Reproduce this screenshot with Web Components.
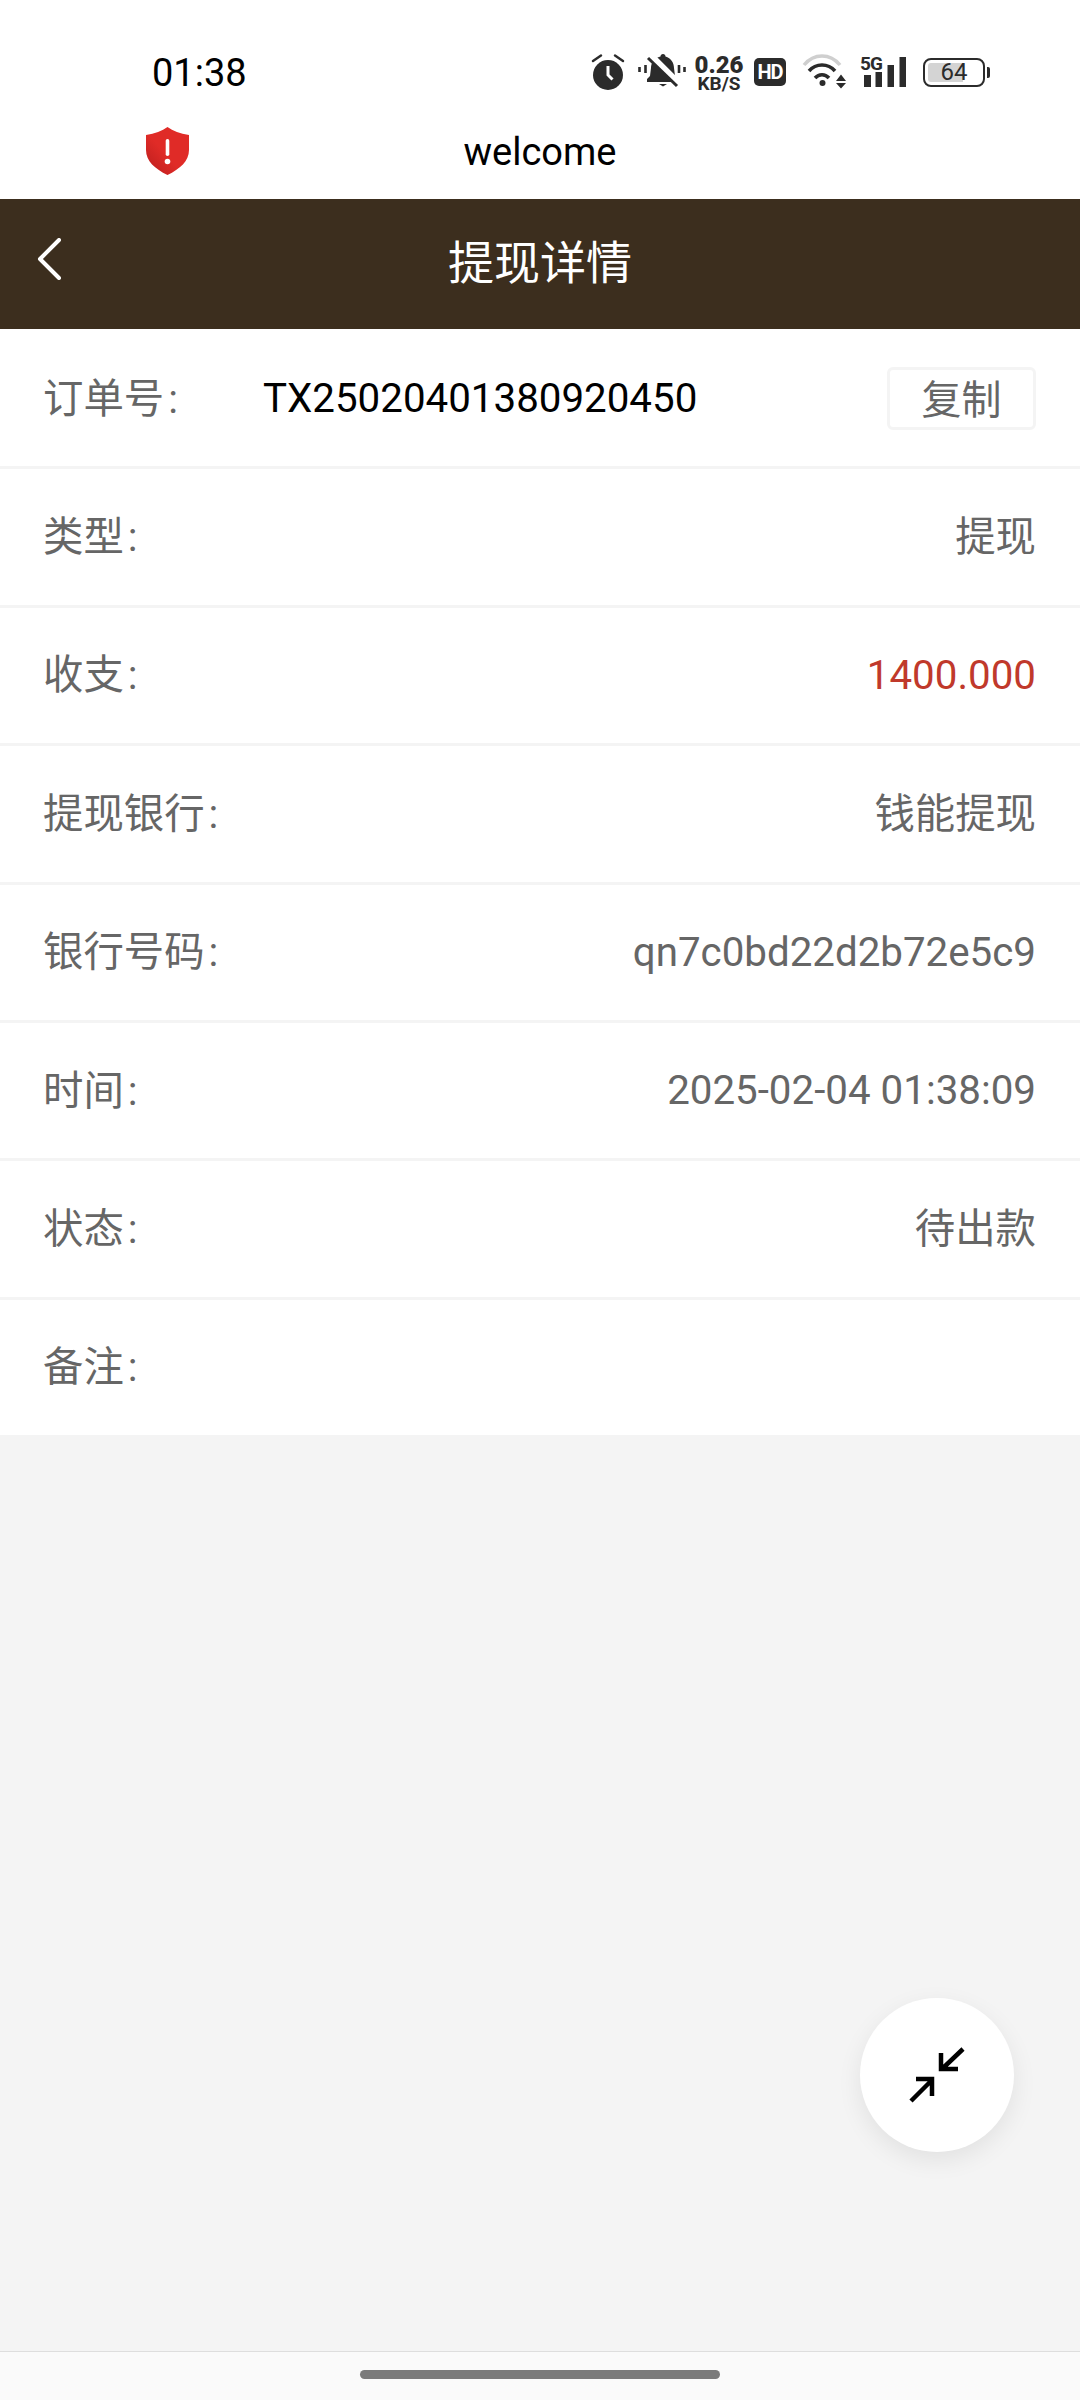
<!DOCTYPE html>
<html lang="zh">
<head>
<meta charset="utf-8">
<title>提现详情</title>
<style>
    html, body { margin: 0; padding: 0; }
    body {
        width: 1080px;
        height: 2400px;
        background: #f4f4f4;
        display: flex;
        flex-direction: column;
        position: relative;
        overflow: hidden;
        font-family: Roboto, "Noto Sans CJK SC", sans-serif;
    }
    detail-list { flex: 1; }
</style>
</head>
<body>
<status-bar></status-bar>
<url-bar>welcome</url-bar>
<title-bar>提现详情</title-bar>
<detail-list>
    <detail-row label="订单号" mode="order">TX25020401380920450</detail-row>
    <detail-row label="类型" mode="cjk">提现</detail-row>
    <detail-row label="收支" mode="money">1400.000</detail-row>
    <detail-row label="提现银行" mode="cjk">钱能提现</detail-row>
    <detail-row label="银行号码">qn7c0bd22d2b72e5c9</detail-row>
    <detail-row label="时间">2025-02-04 01:38:09</detail-row>
    <detail-row label="状态" mode="cjk">待出款</detail-row>
    <detail-row label="备注" class="last"></detail-row>
</detail-list>
<float-button></float-button>
<nav-handle></nav-handle>

<script>
class StatusBar extends HTMLElement {
    connectedCallback() {
        this.attachShadow({ mode: 'open' });
        this.shadowRoot.innerHTML = `
            <style>
                :host {
                    display: flex;
                    align-items: center;
                    justify-content: space-between;
                    height: 105px;
                    padding: 39px 95px 0 152px;
                    box-sizing: border-box;
                    background: #fff;
                    color: #000;
                    font-family: Roboto, sans-serif;
                }
                .time { font-size: 38px; line-height: 40px; margin-top: 1px; }
                .icons { display: flex; align-items: center; color: #2b2b2b; height: 40px; }
                svg { display: block; flex: none; }
                .speed {
                    width: 48px;
                    margin-left: 7px;
                    text-align: center;
                    font-weight: 700;
                    display: flex;
                    flex-direction: column;
                    align-items: center;
                }
                .speed b { font-size: 24px; line-height: 22px; }
                .speed span { font-size: 19px; line-height: 15px; }
                .hd {
                    width: 32px;
                    height: 28px;
                    margin-left: 11px;
                    border-radius: 5px;
                    background: #2b2b2b;
                    color: #fff;
                    font-size: 20px;
                    font-weight: 700;
                    line-height: 28px;
                    text-align: center;
                    letter-spacing: -1px;
                }
                .net { position: relative; width: 46px; height: 36px; margin-left: 12px; }
                .net span {
                    position: absolute;
                    left: 0;
                    top: 0;
                    font-size: 19px;
                    line-height: 20px;
                    font-weight: 700;
                    letter-spacing: -1px;
                }
                .battery {
                    position: relative;
                    width: 62px;
                    height: 29px;
                    margin-left: 17px;
                    box-sizing: border-box;
                    border: 2px solid #2b2b2b;
                    border-radius: 8px;
                    text-align: center;
                    font-size: 24px;
                    line-height: 25px;
                }
                .battery i {
                    position: absolute;
                    left: 3px;
                    top: 3px;
                    bottom: 3px;
                    width: 35px;
                    background: #d4d4d4;
                    border-radius: 3px 0 0 3px;
                }
                .battery span { position: relative; }
                .battery em {
                    position: absolute;
                    right: -7px;
                    top: 7px;
                    width: 3px;
                    height: 11px;
                    background: #2b2b2b;
                    border-radius: 0 2px 2px 0;
                }
            </style>
            <div class="time">01:38</div>
            <div class="icons">
                <svg width="34" height="36" viewBox="0 0 34 36">
                    <circle cx="17" cy="21" r="15" fill="currentColor"/>
                    <path d="M2 7l8-5.500M32 7l-8-5.500" stroke="currentColor" stroke-width="2.400" stroke-linecap="round" fill="none"/>
                    <path d="M17 12v9l4.500 4.500" stroke="#fff" stroke-width="3" fill="none"/>
                </svg>
                <svg width="50" height="36" viewBox="0 0 50 36" style="margin-left:13px">
                    <path d="M1.500 13v5M7.500 11v8M41 11v8M46.500 13v5" stroke="currentColor" stroke-width="2.600" fill="none"/>
                    <path d="M25 0c1.500 0 2.500 1 2.500 2.500C33 4 36 9 36 14l1 8 2 3v3H9v-3l3-3 1-8c0-5 3-10 9.500-11.500C22.500 1 23.500 0 25 0z" fill="currentColor"/>
                    <path d="M21 30h8l-4 2.500z" fill="currentColor"/>
                    <path d="M13 2l28 28" stroke="#fff" stroke-width="7"/>
                    <path d="M10 4l29 28" stroke="currentColor" stroke-width="3"/>
                </svg>
                <div class="speed"><b>0.26</b><span>KB/S</span></div>
                <div class="hd">HD</div>
                <svg width="46" height="36" viewBox="0 0 46 36" style="margin-left:16px">
                    <path d="M2 11C12 -1 28 -1 38 11" stroke="#cfcfcf" stroke-width="3.500" fill="none"/>
                    <path d="M7 17C14 9 26 9 33 17" stroke="currentColor" stroke-width="3.500" fill="none"/>
                    <path d="M13 24c4-4.500 10-4.500 14 0" stroke="currentColor" stroke-width="3.500" fill="none"/>
                    <circle cx="20.500" cy="29" r="3" fill="currentColor"/>
                    <path d="M34 27h10l-5-6.500zM34 29h10l-5 5.500z" fill="currentColor"/>
                </svg>
                <div class="net">
                    <span>5G</span>
                    <svg width="46" height="36" viewBox="0 0 46 36">
                        <path d="M4 21h7v12H4zM15.500 18H22v15h-6.500zM27.500 11H34v22h-6.500zM39.500 3H46v30h-6.500z" fill="currentColor"/>
                    </svg>
                </div>
                <div class="battery"><i></i><span>64</span><em></em></div>
            </div>
        `;
    }
}
customElements.define('status-bar', StatusBar);

class UrlBar extends HTMLElement {
    connectedCallback() {
        this.attachShadow({ mode: 'open' });
        this.shadowRoot.innerHTML = `
            <style>
                :host {
                    display: grid;
                    grid-template-columns: 1fr auto 1fr;
                    align-items: center;
                    height: 94px;
                    background: #fff;
                    color: #000;
                    font-family: Roboto, sans-serif;
                    font-size: 38px;
                }
                svg { display: block; margin-left: 146px; margin-top: -2px; }
                .title { margin-top: -1px; }
            </style>
            <svg width="43" height="48" viewBox="0 0 43 48">
                <defs>
                    <linearGradient id="sh" x1="0" y1="1" x2="1" y2="0">
                        <stop offset="0" stop-color="#b81d1d"/>
                        <stop offset=".45" stop-color="#e02b27"/>
                    </linearGradient>
                </defs>
                <path d="M21.500 0C27 4 34 6.500 43 8v15c0 11-9 19-21.500 25C9 42 0 34 0 23V8C9 6.500 16 4 21.500 0z" fill="url(#sh)"/>
                <rect x="19.700" y="12" width="3.600" height="17" rx="1.800" fill="#fff"/>
                <circle cx="21.500" cy="34.500" r="2.800" fill="#fff"/>
            </svg>
            <div class="title"><slot></slot></div>
            <div></div>
        `;
    }
}
customElements.define('url-bar', UrlBar);

class TitleBar extends HTMLElement {
    connectedCallback() {
        this.attachShadow({ mode: 'open' });
        this.shadowRoot.innerHTML = `
            <style>
                :host {
                    display: grid;
                    grid-template-columns: 1fr auto 1fr;
                    align-items: center;
                    height: 130px;
                    background: #3c2e1e;
                    color: #fff;
                    font-family: "Noto Sans CJK SC", sans-serif;
                    font-size: 46px;
                }
                svg { display: block; margin-left: 36px; margin-top: -10px; }
                .title { padding-bottom: 11px; }
            </style>
            <svg width="26" height="42" viewBox="0 0 26 42">
                <path d="M23 2L4 21l19 19" stroke="#fff" stroke-width="4" stroke-linecap="round" stroke-linejoin="round" fill="none"/>
            </svg>
            <div class="title"><slot></slot></div>
            <div></div>
        `;
    }
}
customElements.define('title-bar', TitleBar);

class DetailList extends HTMLElement {
    connectedCallback() {
        this.attachShadow({ mode: 'open' });
        this.shadowRoot.innerHTML = `
            <style>
                :host { display: block; }
                .rows { display: flex; flex-direction: column; padding-top: 2px; background: #fff; }
            </style>
            <div class="rows"><slot></slot></div>
        `;
    }
}
customElements.define('detail-list', DetailList);

class DetailRow extends HTMLElement {
    connectedCallback() {
        const mode = this.getAttribute('mode') || '';
        this.attachShadow({ mode: 'open' });
        this.shadowRoot.innerHTML = `
            <style>
                :host {
                    display: flex;
                    align-items: center;
                    height: 138.4px;
                    box-sizing: border-box;
                    padding: 0 44px 0 43px;
                    border-bottom: 3px solid #f4f4f4;
                    background: #fff;
                    color: #666;
                    font-family: Roboto, "Noto Sans CJK SC", sans-serif;
                    font-size: 40.3px;
                }
                :host(.last) { border-bottom: 0; height: 135px; }
                .label { flex: none; width: 220px; padding-bottom: 7px; font-size: 40.4px; }
                .label span { margin-left: 4px; }
                .value { flex: 1; text-align: right; }
                .value.cjk { padding-bottom: 7px; font-size: 40.4px; }
                .value.money { color: #c0392b; }
                .value.order { text-align: left; color: #000; }
                button {
                    flex: none;
                    width: 149px;
                    height: 63px;
                    padding: 0 0 3px;
                    box-sizing: border-box;
                    border: 3px solid #f4f4f4;
                    border-radius: 6px;
                    background: #fff;
                    color: #666;
                    font-family: "Noto Sans CJK SC", sans-serif;
                    font-size: 40px;
                    line-height: 52px;
                }
            </style>
            <div class="label">${this.getAttribute('label')}<span>:</span></div>
            <div class="value ${mode}"><slot></slot></div>
            ${mode === 'order' ? '<button>复制</button>' : ''}
        `;
    }
}
customElements.define('detail-row', DetailRow);

class FloatButton extends HTMLElement {
    connectedCallback() {
        this.attachShadow({ mode: 'open' });
        this.shadowRoot.innerHTML = `
            <style>
                :host {
                    position: absolute;
                    left: 860px;
                    top: 1998px;
                    width: 154px;
                    height: 154px;
                    display: block;
                    border-radius: 50%;
                    background: #fff;
                    box-shadow: 0 8px 24px rgba(0, 0, 0, .08);
                }
                svg { display: block; }
            </style>
            <svg width="154" height="154" viewBox="0 0 154 154">
                <path d="M103 51L82 71M81 55v16h17M51 103l21-21M56 81h16v17" stroke="#000" stroke-width="4.500" fill="none"/>
            </svg>
        `;
    }
}
customElements.define('float-button', FloatButton);

class NavHandle extends HTMLElement {
    connectedCallback() {
        this.attachShadow({ mode: 'open' });
        this.shadowRoot.innerHTML = `
            <style>
                :host {
                    display: flex;
                    justify-content: center;
                    height: 49px;
                    padding-top: 18px;
                    box-sizing: border-box;
                    background: #fafafa;
                    border-top: 1px solid #dedede;
                }
                div { width: 360px; height: 9px; border-radius: 5px; background: #7b7b7b; }
            </style>
            <div></div>
        `;
    }
}
customElements.define('nav-handle', NavHandle);
</script>
</body>
</html>
